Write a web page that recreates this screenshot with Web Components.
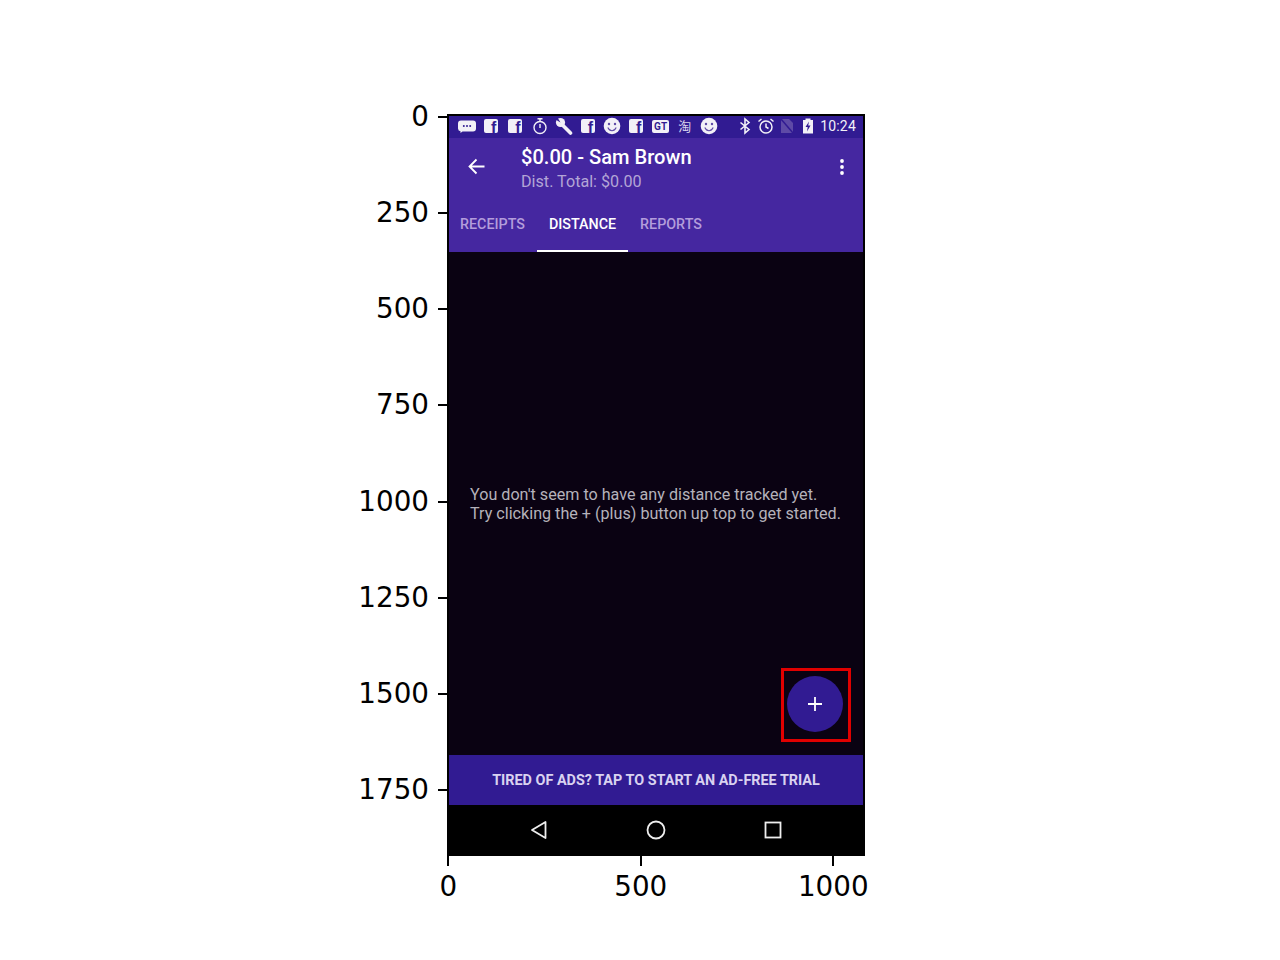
<!DOCTYPE html>
<html>
<head>
<meta charset="utf-8">
<title>Distance</title>
<style>
  body{ margin:0; background:#fff; font-family:Roboto, sans-serif; }
</style>
</head>
<body>
<plot-figure>
  <status-bar></status-bar>
  <app-toolbar title-text="$0.00 - Sam Brown" sub-text="Dist. Total: $0.00"></app-toolbar>
  <tab-strip></tab-strip>
  <empty-panel>
    You don't seem to have any distance tracked yet.<br>
    Try clicking the + (plus) button up top to get started.
  </empty-panel>
  <ad-banner>TIRED OF ADS? TAP TO START AN AD-FREE TRIAL</ad-banner>
  <nav-bar></nav-bar>
</plot-figure>

<script>
class PlotFigure extends HTMLElement{
  constructor(){
    super()
    this.shadow = this.attachShadow({mode: 'open'})
  }
  connectedCallback(){
    const yTicks = ['0','250','500','750','1000','1250','1500','1750']
    const xTicks = ['0','500','1000']
    this.shadow.innerHTML = `
      <style>
        :host{
          display:grid;
          grid-template-columns:447px 418px;
          grid-template-rows:742px auto;
          width:1280px;
          height:960px;
          box-sizing:border-box;
          padding-top:114px;
          font-family:"DejaVu Sans", sans-serif;
          font-size:27.78px;
          color:#000;
          overflow:hidden;
        }
        #yaxis{ display:flex; flex-direction:column; margin-top:-45.3px; }
        .yt{
          height:96.2px;
          flex:none;
          display:flex;
          justify-content:flex-end;
          align-items:center;
          gap:8.5px;
          line-height:1;
        }
        .yt i{ width:9.5px; height:2px; background:#000; display:block; }
        #phone{
          border:2px solid #000;
          display:flex;
          flex-direction:column;
          background:#000;
          box-sizing:border-box;
          width:418px;
          height:742px;
        }
        #xaxis{ grid-column:2; display:flex; margin-left:-95px; }
        .xt{
          width:192.5px;
          flex:none;
          display:flex;
          flex-direction:column;
          align-items:center;
          line-height:1;
        }
        .xt i{ width:2px; height:10px; background:#000; display:block; margin-bottom:7px; }
      </style>
      <div id="yaxis">${yTicks.map(t => `<div class="yt"><span>${t}</span><i></i></div>`).join('')}</div>
      <div id="phone"><slot></slot></div>
      <div id="xaxis">${xTicks.map(t => `<div class="xt"><i></i><span>${t}</span></div>`).join('')}</div>
    `
  }
}

class StatusBar extends HTMLElement{
  constructor(){
    super()
    this.shadow = this.attachShadow({mode: 'open'})
  }
  connectedCallback(){
    const fb = `<span class="f">f</span>`
    const smile = `<svg viewBox="0 0 18 18"><circle cx="9" cy="9" r="8.300" fill="#f2f0f7"/><circle cx="6" cy="7" r="1.200" fill="#5e4aa6"/><circle cx="12" cy="7" r="1.200" fill="#5e4aa6"/><path d="M4.800 10.600c1 2.200 2.600 3.200 4.200 3.200s3.200-1 4.200-3.200" fill="none" stroke="#5e4aa6" stroke-width="1.100"/></svg>`
    const left = [
      `<svg viewBox="0 0 18 18"><path d="M3 3.500h12a3 3 0 0 1 3 3v5a3 3 0 0 1-3 3H4.500L2.500 16v-1.700A3 3 0 0 1 0 11.500v-5a3 3 0 0 1 3-3z" fill="#f2f0f7"/><circle cx="5.800" cy="9" r="1" fill="#311b92"/><circle cx="9" cy="9" r="1" fill="#311b92"/><circle cx="12.200" cy="9" r="1" fill="#311b92"/></svg>`,
      fb, fb,
      `<svg viewBox="0 0 18 18" fill="none" stroke="#f2f0f7" stroke-width="1.400"><circle cx="9" cy="10.500" r="6"/><path d="M6.500 1.800h5M9 2v2.500M9 7v4"/></svg>`,
      `<svg viewBox="0 0 18 18"><path d="M7 7.500 15.500 16" stroke="#f2f0f7" stroke-width="3.600" stroke-linecap="round"/><circle cx="5.500" cy="5.500" r="4.600" fill="#f2f0f7"/><path d="M5.500 5.500 .5 2.500 2.500 .5z" fill="#311b92"/></svg>`,
      fb, smile, fb,
      `<span class="gt">GT</span>`,
      `<span class="tao">淘</span>`,
      smile
    ]
    const right = [
      `<svg viewBox="0 0 18 18" fill="none" stroke="#f2f0f7" stroke-width="1.600"><path d="M4.500 5.500 13 12.500 9 16V2l4 3.500L4.500 12.500"/></svg>`,
      `<svg viewBox="0 0 18 18" fill="none" stroke="#f2f0f7" stroke-width="1.500"><circle cx="9" cy="10" r="6"/><path d="M9 6.500V10l2.500 1.500M1.500 4.500 4.500 2M16.500 4.500 13.500 2"/></svg>`,
      `<svg viewBox="0 0 18 18"><path d="M3 2h8l4 4v10H3z" fill="#5e4aa6"/><path d="M3 2 15 16" stroke="#311b92" stroke-width="1.500"/></svg>`,
      `<svg viewBox="0 0 18 18"><path d="M6.500 1.500h5V3H14V16.500H4V3h2.500z" fill="#f2f0f7"/><path d="M10 4.500 6.500 10h2.200L8 14.500 11.500 8.500H9.200z" fill="#311b92"/></svg>`
    ]
    this.shadow.innerHTML = `
      <style>
        :host{
          display:flex;
          flex:none;
          height:22px;
          background:#311b92;
          align-items:center;
          padding:0 7px 2px 6px;
          box-sizing:border-box;
          color:#f2f0f7;
          font-family:Roboto, sans-serif;
        }
        .group{ display:flex; align-items:center; }
        .slot{ width:24.2px; height:20px; display:flex; align-items:center; justify-content:center; flex:none; }
        svg{ width:18px; height:18px; display:block; }
        .f{
          width:14px; height:14px; background:#f2f0f7; color:#311b92; border-radius:2px;
          font:700 16px/17px "Liberation Sans", sans-serif; text-align:right; padding-right:2px; box-sizing:border-box;
        }
        .gt{
          width:17px; height:13px; background:#f2f0f7; color:#311b92; border-radius:2px;
          font:700 10px/13px Roboto, sans-serif; text-align:center;
        }
        .tao{ font:13px/16px "Noto Sans CJK SC", sans-serif; color:#d9d4ec; }
        #right{ margin-left:auto; }
        #right .slot{ width:21px; }
        #time{ font-size:14px; margin-left:2px; letter-spacing:.2px; }
      </style>
      <div class="group">${left.map(i => `<div class="slot">${i}</div>`).join('')}</div>
      <div class="group" id="right">${right.map(i => `<div class="slot">${i}</div>`).join('')}<span id="time">10:24</span></div>
    `
  }
}

class AppToolbar extends HTMLElement{
  constructor(){
    super()
    this.shadow = this.attachShadow({mode: 'open'})
  }
  connectedCallback(){
    this.shadow.innerHTML = `
      <style>
        :host{
          display:flex;
          flex:none;
          height:58px;
          background:#4527a0;
          align-items:center;
          color:#fff;
          font-family:Roboto, sans-serif;
        }
        #back{ width:72px; flex:none; display:flex; padding:0 0 2px 18px; box-sizing:border-box; }
        #back svg{ width:19px; height:19px; display:block; }
        #text{ flex:1; display:flex; flex-direction:column; margin-top:5px; }
        #title{ font-size:20.100px; font-weight:500; line-height:24px; }
        #sub{ font-size:16.150px; line-height:24px; margin-top:1px; color:#b3a5d6; }
        #more{ width:44px; flex:none; display:flex; justify-content:center; padding-left:2px; box-sizing:border-box; }
        #more svg{ width:4px; height:16px; display:block; }
      </style>
      <div id="back">
        <svg viewBox="0 0 19 19" fill="none" stroke="#fff" stroke-width="1.800"><path d="M17.500 9.500H2.500M9.500 2.500l-7 7 7 7"/></svg>
      </div>
      <div id="text">
        <div id="title">${this.getAttribute('title-text')}</div>
        <div id="sub">${this.getAttribute('sub-text')}</div>
      </div>
      <div id="more">
        <svg viewBox="0 0 4 16" fill="#fff"><circle cx="2" cy="2" r="1.900"/><circle cx="2" cy="8" r="1.900"/><circle cx="2" cy="14" r="1.900"/></svg>
      </div>
    `
  }
}

class TabStrip extends HTMLElement{
  constructor(){
    super()
    this.shadow = this.attachShadow({mode: 'open'})
  }
  connectedCallback(){
    this.shadow.innerHTML = `
      <style>
        :host{
          display:flex;
          flex:none;
          height:56px;
          background:#4527a0;
          font-family:Roboto, sans-serif;
          font-size:14.300px;
          font-weight:500;
        }
        .tab{
          padding:2px 12px 0;
          display:flex;
          align-items:center;
          color:#b39ddb;
          box-sizing:border-box;
          border-bottom:2px solid transparent;
        }
        .tab:first-of-type{ padding-left:11px; }
        .tab.on{ color:#fff; border-bottom-color:#fff; }
      </style>
      <div class="tab">RECEIPTS</div>
      <div class="tab on">DISTANCE</div>
      <div class="tab">REPORTS</div>
    `
  }
}

class EmptyPanel extends HTMLElement{
  constructor(){
    super()
    this.shadow = this.attachShadow({mode: 'open'})
  }
  connectedCallback(){
    this.shadow.innerHTML = `
      <style>
        :host{
          display:flex;
          flex:none;
          height:503px;
          background:#0a0212;
          align-items:center;
          padding-left:21px;
          box-sizing:border-box;
          position:relative;
          color:#b5b2ba;
          font-family:Roboto, sans-serif;
          font-size:16.150px;
          line-height:19px;
        }
        #fab{
          position:absolute;
          left:338px;
          top:424px;
          width:56px;
          height:56px;
          border-radius:50%;
          background:#311b92;
          display:flex;
          align-items:center;
          justify-content:center;
        }
        #fab svg{ width:14px; height:14px; display:block; }
        #mark{
          position:absolute;
          left:332px;
          top:416px;
          width:70px;
          height:74px;
          box-sizing:border-box;
          border:3px solid #e00000;
        }
      </style>
      <div><slot></slot></div>
      <div id="fab"><svg viewBox="0 0 14 14" stroke="#fff" stroke-width="1.800"><path d="M7 0v14M0 7h14"/></svg></div>
      <div id="mark"></div>
    `
  }
}

class AdBanner extends HTMLElement{
  constructor(){
    super()
    this.shadow = this.attachShadow({mode: 'open'})
  }
  connectedCallback(){
    this.shadow.innerHTML = `
      <style>
        :host{
          display:flex;
          flex:none;
          height:50px;
          background:#311b92;
          align-items:center;
          justify-content:center;
          color:#d9d2f0;
          font-family:Roboto, sans-serif;
          font-size:14.400px;
          font-weight:700;
        }
      </style>
      <slot></slot>
    `
  }
}

class NavBar extends HTMLElement{
  constructor(){
    super()
    this.shadow = this.attachShadow({mode: 'open'})
  }
  connectedCallback(){
    this.shadow.innerHTML = `
      <style>
        :host{
          display:flex;
          flex:1;
          background:#000;
          align-items:center;
          justify-content:center;
          gap:97px;
        }
        svg{ width:20px; height:20px; display:block; }
      </style>
      <svg viewBox="0 0 20 20" fill="none" stroke="#eee" stroke-width="1.800"><path d="M16.500 2v16L3 10z" stroke-linejoin="round"/></svg>
      <svg viewBox="0 0 20 20" fill="none" stroke="#eee" stroke-width="1.800"><circle cx="10" cy="10" r="8.500"/></svg>
      <svg viewBox="0 0 20 20" fill="none" stroke="#eee" stroke-width="1.800"><rect x="2.500" y="2.500" width="15" height="15"/></svg>
    `
  }
}

customElements.define('plot-figure', PlotFigure)
customElements.define('status-bar', StatusBar)
customElements.define('app-toolbar', AppToolbar)
customElements.define('tab-strip', TabStrip)
customElements.define('empty-panel', EmptyPanel)
customElements.define('ad-banner', AdBanner)
customElements.define('nav-bar', NavBar)
</script>
</body>
</html>
